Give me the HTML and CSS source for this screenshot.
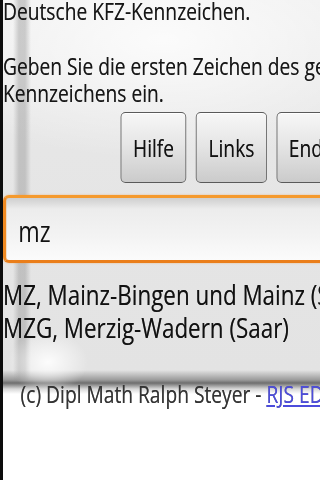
FILE: index.html
```
<!DOCTYPE html>
<html lang="de">
<head>
<meta charset="utf-8">
<title>Deutsche KFZ-Kennzeichen</title>
<link rel="stylesheet" href="styles.css">
</head>
<body>
<div class="page">
  <p class="title">Deutsche KFZ-Kennzeichen.</p>
  <p class="intro">Geben Sie die ersten Zeichen des gesuchten Kennzeichens ein.</p>
  <div class="buttons">
    <button class="btn" type="button">Hilfe</button>
    <button class="btn" type="button">Links</button>
    <button class="btn" type="button">Ende</button>
  </div>
  <input class="search" type="text" value="mz">
  <div class="results">
    <div class="result">MZ, Mainz-Bingen und Mainz (Stadt)</div>
    <div class="result">MZG, Merzig-Wadern (Saar)</div>
  </div>
  <p class="footer">(c) Dipl Math Ralph Steyer - <a class="link" href="#">RJS EDV-KnowHow</a></p>
</div>
</body>
</html>
```
FILE: styles.css
```
html, body {
  overflow: hidden;
}
html {
  background: #ffffff;
}
body {
  margin: 0;
  min-height: 480px;
  border-left: 3px solid #0c0c0c;
  font-family: "Open Sans", "DejaVu Sans", sans-serif;
  color: #161616;
  background:
    radial-gradient(ellipse 40px 30px at 45px 362px, rgba(255,255,255,0.9), rgba(255,255,255,0) 100%) no-repeat,
    linear-gradient(to right, rgba(0,0,0,0) 10px, rgba(140,140,140,0.4) 16px, rgba(140,140,140,0.4) 22px, rgba(0,0,0,0) 28px) 0 0 / 100% 380px no-repeat,
    radial-gradient(ellipse 260px 120px at 160px 40px, rgba(255,255,255,0.8), rgba(255,255,255,0) 100%) no-repeat,
    linear-gradient(to bottom, #efefef 0, #e6e6e6 150px, #e3e3e3 370px, #9a9a9a 380px, #6e6e6e 383px, #d8d8d8 389px, #ffffff 394px, #ffffff 100%);
}
.page {
  width: 580px;
  margin-top: -3.5px;
  transform: scaleX(0.8);
  transform-origin: 0 0;
  text-shadow: 0 0 0.4px rgba(0,0,0,0.5);
}
.title, .intro {
  margin: 0;
  font-size: 24px;
  line-height: 27.5px;
}
.title {
  margin-bottom: 27.5px;
}
.buttons {
  display: flex;
  gap: 12px;
  margin-top: 5px;
  padding-left: 147px;
}
.btn {
  flex: none;
  height: 71px;
  padding: 0 14.5px;
  border: 1px solid #5a5a5a;
  border-left-width: 1.25px;
  border-right-width: 1.25px;
  border-radius: 6.25px / 5px;
  background: linear-gradient(to bottom, #f7f7f7 0%, #e6e6e6 45%, #cbcbcb 100%);
  box-shadow: inset 0 1px 0 #ffffff;
  font-family: "Open Sans", "DejaVu Sans", sans-serif;
  font-size: 24px;
  color: #111111;
  text-shadow: 0 0 0.4px rgba(0,0,0,0.5);
}
.search {
  display: block;
  box-sizing: border-box;
  width: 560px;
  height: 68px;
  margin-top: 12.5px;
  padding: 3px 0 0 15px;
  border-style: solid;
  border-color: #f59a2e #f08a22 #ea7e1a #f08a22;
  border-width: 3.5px 4.4px;
  border-radius: 7.5px / 6px;
  background: linear-gradient(to bottom, #cfcfcf 0%, #ececec 18%, #f3f3f3 60%, #fbfbfb 100%);
  box-shadow: 0 0 2px rgba(240,140,40,0.6);
  font-family: "Open Sans", "DejaVu Sans", sans-serif;
  font-size: 29px;
  color: #111111;
  outline: none;
}
.results {
  margin-top: 14.5px;
  font-size: 28px;
  line-height: 33px;
  color: #111111;
}
.result {
  white-space: nowrap;
}
.footer {
  margin: 36.5px 0 0;
  padding-left: 22px;
  font-size: 24px;
  line-height: 27.5px;
  color: #333333;
  white-space: nowrap;
}
.link {
  color: #4c4cdc;
  text-decoration: underline;
}
```
